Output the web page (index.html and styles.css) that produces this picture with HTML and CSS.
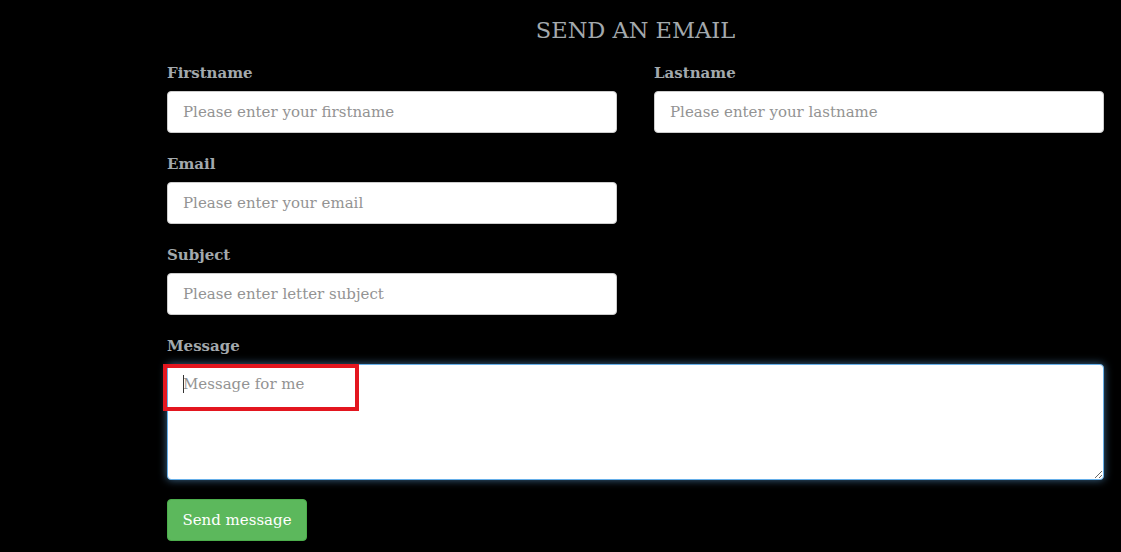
FILE: index.html
```html
<!DOCTYPE html>
<html>
<head>
<meta charset="utf-8">
<link rel="stylesheet" href="styles.css">
</head>
<body>
<main class="wrap">
  <h1 class="title">SEND AN EMAIL</h1>
  <form class="form">
    <div class="row two">
      <div class="field">
        <label class="label">Firstname</label>
        <input class="input" type="text" placeholder="Please enter your firstname">
      </div>
      <div class="field">
        <label class="label">Lastname</label>
        <input class="input" type="text" placeholder="Please enter your lastname">
      </div>
    </div>
    <div class="row two">
      <div class="field">
        <label class="label">Email</label>
        <input class="input" type="text" placeholder="Please enter your email">
      </div>
    </div>
    <div class="row two">
      <div class="field">
        <label class="label">Subject</label>
        <input class="input" type="text" placeholder="Please enter letter subject">
      </div>
    </div>
    <div class="row">
      <div class="field msg">
        <label class="label">Message</label>
        <div class="ta-wrap">
          <textarea class="textarea" placeholder="Message for me"></textarea>
          <span class="caret"></span>
          <span class="highlight"></span>
        </div>
      </div>
    </div>
    <button class="btn" type="button">Send message</button>
  </form>
</main>
</body>
</html>
```
FILE: styles.css
```css
html, body {
  margin: 0;
  background: #000;
  font-family: "DejaVu Serif", Georgia, serif;
}
.wrap {
  margin-left: 167px;
  width: 937px;
}
.title {
  margin: 0;
  padding-top: 16px;
  text-align: center;
  font-weight: normal;
  font-size: 22.5px;
  line-height: 28px;
  color: #a3a9ad;
}
.form {
  display: flex;
  flex-direction: column;
  margin-top: 19px;
}
.row.two {
  display: grid;
  grid-template-columns: 450px 450px;
  column-gap: 37px;
}
.field {
  display: flex;
  flex-direction: column;
  margin-bottom: 21px;
}
.field.msg {
  margin-bottom: 19px;
}
.label {
  font-weight: bold;
  font-size: 15px;
  line-height: 20px;
  color: #a3a9ad;
  margin-bottom: 8px;
}
.input {
  box-sizing: border-box;
  height: 42px;
  border: 1px solid #ccc;
  border-radius: 4px;
  background: #fff;
  padding: 0 15px;
  font-family: inherit;
  font-size: 15px;
  color: #555;
  outline: none;
}
.input::placeholder, .textarea::placeholder {
  color: #939393;
}
.ta-wrap {
  position: relative;
}
.textarea {
  display: block;
  box-sizing: border-box;
  width: 937px;
  height: 116px;
  border: 1px solid #66afe9;
  border-radius: 4px;
  padding: 8px 15px;
  font-family: inherit;
  font-size: 15px;
  line-height: 22px;
  outline: none;
  box-shadow: 0 0 8px rgba(102, 175, 233, 0.6);
  resize: vertical;
}
.caret {
  position: absolute;
  left: 16px;
  top: 11px;
  width: 1px;
  height: 18px;
  background: #333;
}
.highlight {
  position: absolute;
  left: -4px;
  top: 0;
  width: 188px;
  height: 39px;
  border: 4px solid #e3161f;
}
.btn {
  align-self: flex-start;
  height: 42px;
  width: 140px;
  border: 1px solid #4cae4c;
  border-radius: 4px;
  background: #5cb85c;
  color: #fff;
  font-family: inherit;
  font-size: 15px;
  cursor: pointer;
}
```
